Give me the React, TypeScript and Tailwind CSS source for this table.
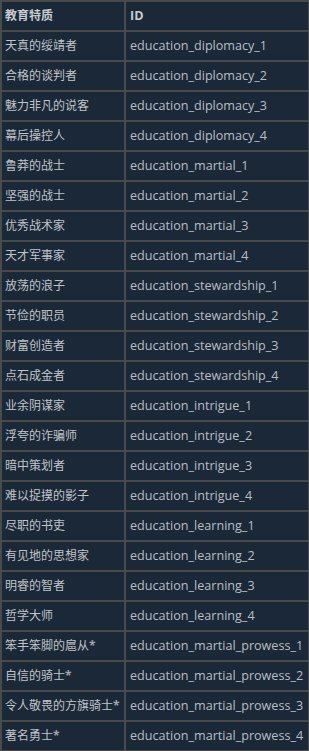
const rows: [string, string][] = [
  ["天真的绥靖者", "education_diplomacy_1"],
  ["合格的谈判者", "education_diplomacy_2"],
  ["魅力非凡的说客", "education_diplomacy_3"],
  ["幕后操控人", "education_diplomacy_4"],
  ["鲁莽的战士", "education_martial_1"],
  ["坚强的战士", "education_martial_2"],
  ["优秀战术家", "education_martial_3"],
  ["天才军事家", "education_martial_4"],
  ["放荡的浪子", "education_stewardship_1"],
  ["节俭的职员", "education_stewardship_2"],
  ["财富创造者", "education_stewardship_3"],
  ["点石成金者", "education_stewardship_4"],
  ["业余阴谋家", "education_intrigue_1"],
  ["浮夸的诈骗师", "education_intrigue_2"],
  ["暗中策划者", "education_intrigue_3"],
  ["难以捉摸的影子", "education_intrigue_4"],
  ["尽职的书吏", "education_learning_1"],
  ["有见地的思想家", "education_learning_2"],
  ["明睿的智者", "education_learning_3"],
  ["哲学大师", "education_learning_4"],
  ["笨手笨脚的扈从*", "education_martial_prowess_1"],
  ["自信的骑士*", "education_martial_prowess_2"],
  ["令人敬畏的方旗骑士*", "education_martial_prowess_3"],
  ["著名勇士*", "education_martial_prowess_4"],
];

export default function App() {
  return (
    <div className="min-h-screen bg-[#1b2838] overflow-hidden">
      <table className="border-collapse border-2 border-[#4a4a4a] text-[12px] text-[#c0c4c8] font-['Open_Sans','Noto_Sans_CJK_SC',sans-serif] w-[310px]">
        <thead>
          <tr className="h-[30px]">
            <th className="border-2 border-[#4a4a4a] w-[124px] px-[3px] text-left font-bold text-[#c8ccd0]">
              教育特质
            </th>
            <th className="border-2 border-[#4a4a4a] pl-[4px] text-left font-bold text-[12.6px] text-[#c8ccd0]">
              ID
            </th>
          </tr>
        </thead>
        <tbody>
          {rows.map(([name, id]) => {
            const star = name.endsWith("*");
            return (
              <tr key={id} className="h-[30px]">
                <td className="border-2 border-[#4a4a4a] px-[3px] whitespace-nowrap">
                  {star ? name.slice(0, -1) : name}
                  {star && <span className="font-bold text-[#a0a6ac]">*</span>}
                </td>
                <td className="border-2 border-[#4a4a4a] pl-[4px] whitespace-nowrap text-[12.6px] text-[#b8bec4]">
                  {id}
                </td>
              </tr>
            );
          })}
        </tbody>
      </table>
    </div>
  );
}
